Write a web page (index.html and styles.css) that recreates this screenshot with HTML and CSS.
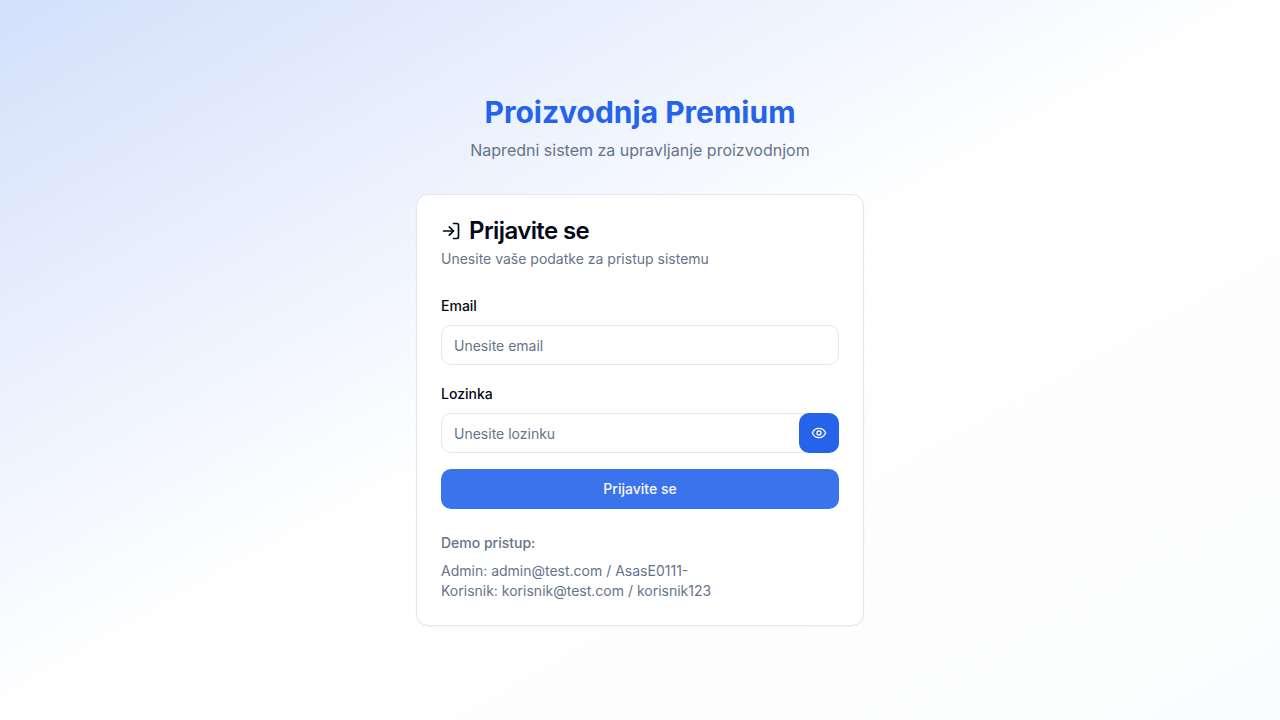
FILE: index.html
```html
<!DOCTYPE html>
<html lang="sr-Latn">
<head>
<meta charset="utf-8">
<meta name="viewport" content="width=device-width, initial-scale=1">
<title>Proizvodnja Premium</title>
<link rel="stylesheet" href="styles.css">
</head>
<body>
<main class="page">
  <div class="login">
    <header class="brand">
      <h1 class="brand-name">Proizvodnja Premium</h1>
      <p class="brand-tagline">Napredni sistem za upravljanje proizvodnjom</p>
    </header>
    <section class="card">
      <div class="card-header">
        <h2 class="card-title">
          <svg class="icon-login" viewBox="0 0 24 24" aria-hidden="true"><path d="M15 3h4a2 2 0 0 1 2 2v14a2 2 0 0 1-2 2h-4"/><polyline points="10 17 15 12 10 7"/><line x1="15" x2="3" y1="12" y2="12"/></svg>
          Prijavite se
        </h2>
        <p class="card-description">Unesite vaše podatke za pristup sistemu</p>
      </div>
      <form class="form">
        <div class="field">
          <label class="label" for="email">Email</label>
          <div class="control">
            <input class="input" id="email" type="email" placeholder="Unesite email">
          </div>
        </div>
        <div class="field">
          <label class="label" for="password">Lozinka</label>
          <div class="control">
            <input class="input" id="password" type="password" placeholder="Unesite lozinku">
            <button class="toggle" type="button" aria-label="Prikaži lozinku">
              <svg class="icon-eye" viewBox="0 0 24 24" aria-hidden="true"><path d="M2 12s3-7 10-7 10 7 10 7-3 7-10 7-10-7-10-7Z"/><circle cx="12" cy="12" r="3"/></svg>
            </button>
          </div>
        </div>
        <button class="submit" type="submit">Prijavite se</button>
      </form>
      <div class="demo">
        <p class="demo-title">Demo pristup:</p>
        <p>Admin: admin@test.com / AsasE0111-</p>
        <p>Korisnik: korisnik@test.com / korisnik123</p>
      </div>
    </section>
  </div>
</main>
</body>
</html>
```

FILE: styles.css
```css
*, *::before, *::after { box-sizing: border-box; }

body, h1, h2, p { margin: 0; }

body {
  font-family: Inter, "Liberation Sans", sans-serif;
  font-size: 16px;
  line-height: 24px;
  color: #020817;
  background: #ffffff;
}

.page {
  min-height: 100vh;
  padding: 16px;
  display: flex;
  align-items: center;
  justify-content: center;
  background: linear-gradient(to bottom right, #d3e0fb, #ffffff 50%, #fbfcfd);
}

.login {
  width: 100%;
  max-width: 448px;
}

.brand {
  margin-bottom: 32px;
  text-align: center;
}

.brand-name {
  margin-bottom: 8px;
  font-size: 30px;
  line-height: 36px;
  font-weight: 700;
  color: #2563eb;
}

.brand-tagline {
  color: #64748b;
}

.card {
  padding: 24px;
  border: 1px solid #e2e8f0;
  border-radius: 12px;
  background: #ffffff;
  box-shadow: 0 1px 2px rgba(0, 0, 0, 0.05);
}

.card-title {
  margin-bottom: 6px;
  display: flex;
  align-items: center;
  gap: 8px;
  font-size: 24px;
  line-height: 24px;
  font-weight: 600;
  letter-spacing: -0.025em;
}

.icon-login, .icon-eye {
  flex: none;
  fill: none;
  stroke: currentColor;
  stroke-width: 2;
  stroke-linecap: round;
  stroke-linejoin: round;
}

.icon-login { width: 20px; height: 20px; }
.icon-eye { width: 16px; height: 16px; }

.card-description {
  font-size: 14px;
  line-height: 20px;
  color: #64748b;
}

.form {
  margin-top: 24px;
  display: flex;
  flex-direction: column;
  gap: 16px;
}

.label {
  font-size: 14px;
  line-height: 14px;
  font-weight: 500;
}

.control {
  position: relative;
  margin-top: 8px;
}

.input {
  display: block;
  width: 100%;
  height: 40px;
  padding: 8px 12px;
  border: 1px solid #e2e8f0;
  border-radius: 10px;
  background: #ffffff;
  font: inherit;
  font-size: 14px;
  line-height: 20px;
  color: inherit;
}

.input::placeholder { color: #64748b; opacity: 1; }

.toggle, .submit {
  height: 40px;
  border: 0;
  border-radius: 10px;
  font: inherit;
  color: #f8fafc;
  cursor: pointer;
}

.toggle {
  position: absolute;
  top: 0;
  right: 0;
  width: 40px;
  padding: 0;
  display: flex;
  align-items: center;
  justify-content: center;
  background: #2563eb;
}

.submit {
  width: 100%;
  padding: 8px 16px;
  background: #3b73ed;
  font-size: 14px;
  line-height: 20px;
  font-weight: 500;
}

.demo {
  margin-top: 24px;
  font-size: 14px;
  line-height: 20px;
  color: #64748b;
}

.demo-title {
  margin-bottom: 8px;
  font-weight: 500;
}
```
